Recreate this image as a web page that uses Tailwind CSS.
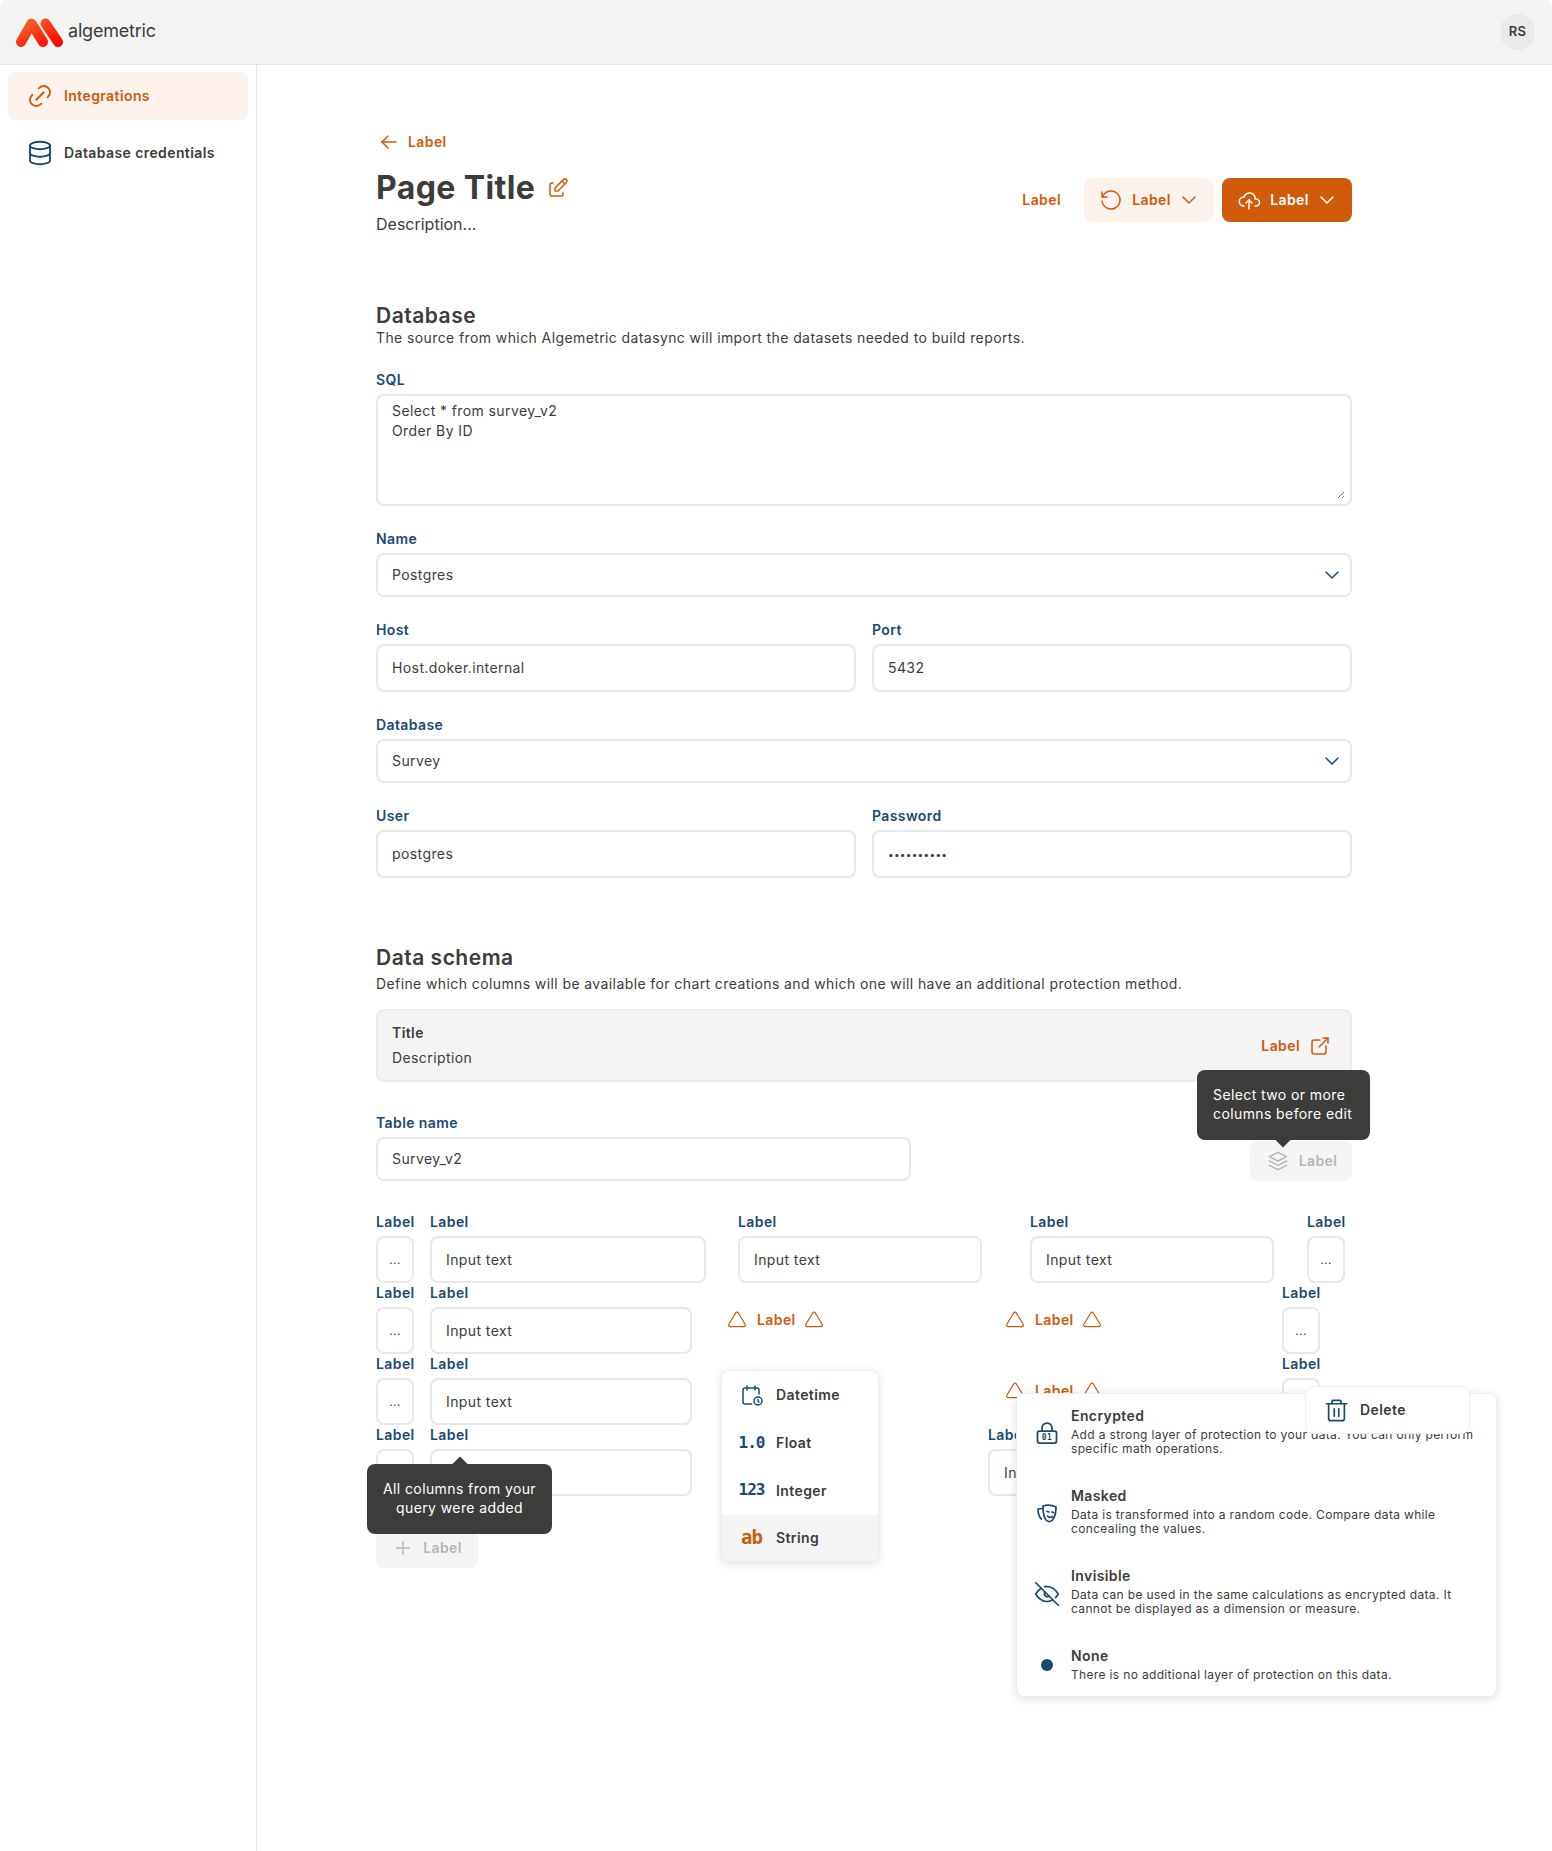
<!doctype html>
<html lang="en">
  <head>
    <meta charset="UTF-8" />
    <meta name="viewport" content="width=device-width, initial-scale=1.0" />
    <title>Integrations</title>
    <script src="https://cdn.jsdelivr.net/npm/@tailwindcss/browser@4"></script>
  </head>
  <body class="bg-white font-['Inter',sans-serif] text-[#3c3c3b] tracking-[0.4px]">
    <div class="relative h-[1851px] w-[1552px] overflow-hidden">
      <!-- top bar -->
      <header class="flex h-[65px] items-center justify-between rounded-t-lg border-b border-[#e5e5e5] bg-[#f4f4f4] pl-4 pr-[17px]">
        <div class="flex items-center gap-[5px]">
          <svg width="47" height="30" viewBox="0 0 47 30">
            <defs><linearGradient id="logo" x1="0" x2="1" y1="0" y2="1"><stop offset="0" stop-color="#f4652a"/><stop offset="1" stop-color="#ff0a00"/></linearGradient></defs>
            <path d="M5 25L15.500 6.500L27 25M29.500 6.500L42 25" fill="none" stroke="url(#logo)" stroke-width="10" stroke-linecap="round" stroke-linejoin="round"/>
          </svg>
          <span class="mt-[-4px] text-[18px] tracking-[-0.2px] text-[#3c3c3b]">algemetric</span>
        </div>
        <div class="flex h-9 w-[35px] items-center justify-center rounded-full bg-[#e9eaeb] text-[13px] font-semibold">RS</div>
      </header>

      <div class="flex h-[1786px]">
        <!-- sidebar -->
        <aside class="flex w-[257px] shrink-0 flex-col gap-[9px] border-r border-[#e5e5e5] px-2 pt-[7px] text-sm font-semibold">
          <a class="flex h-12 items-center gap-[9px] rounded-lg bg-[#fdf2ec] pl-[17px] text-[#d15a0b]">
            <svg class="h-[30px] w-[30px]" viewBox="0 0 24 24" fill="none" stroke="currentColor" stroke-width="1.5" stroke-linecap="round" stroke-linejoin="round"><path d="M9 15l6 -6"/><path d="M11 6l.463 -.536a5 5 0 0 1 7.071 7.072l-.534 .464"/><path d="M13 18l-.397 .534a5.068 5.068 0 0 1 -7.127 0a4.972 4.972 0 0 1 0 -7.071l.524 -.463"/></svg>
            Integrations
          </a>
          <a class="flex h-12 items-center gap-[9px] pl-[17px]">
            <svg class="h-[30px] w-[30px] text-[#1a4a72]" viewBox="0 0 24 24" fill="none" stroke="currentColor" stroke-width="1.5" stroke-linecap="round" stroke-linejoin="round"><path d="M4 6a8 3 0 1 0 16 0a8 3 0 1 0 -16 0"/><path d="M4 6v6a8 3 0 0 0 16 0v-6"/><path d="M4 12v6a8 3 0 0 0 16 0v-6"/></svg>
            Database credentials
          </a>
        </aside>

        <!-- main -->
        <main class="w-[1095px] pl-[119px] pt-[67px]">
          <a class="flex h-5 items-center gap-[7px] pl-px text-sm font-semibold text-[#d15a0b]">
            <svg class="h-6 w-6 shrink-0" viewBox="0 0 24 24" fill="none" stroke="currentColor" stroke-width="1.5" stroke-linecap="round" stroke-linejoin="round"><path d="M5 12l14 0"/><path d="M5 12l6 6"/><path d="M5 12l6 -6"/></svg>
            Label
          </a>

          <div class="mt-4 flex items-start justify-between">
            <div>
              <div class="flex h-[40px] items-center gap-[11px]">
                <h1 class="text-[32px] font-bold leading-10">Page Title</h1>
                <svg class="h-6 w-6 text-[#d15a0b]" viewBox="0 0 24 24" fill="none" stroke="currentColor" stroke-width="1.5" stroke-linecap="round" stroke-linejoin="round"><path d="M7 7h-1a2 2 0 0 0 -2 2v9a2 2 0 0 0 2 2h9a2 2 0 0 0 2 -2v-1"/><path d="M20.385 6.585a2.1 2.1 0 0 0 -2.97 -2.97l-8.415 8.385v3h3l8.385 -8.415z"/><path d="M16 5l3 3"/></svg>
              </div>
              <p class="mt-1 text-base leading-6 tracking-normal">Description...</p>
            </div>
            <div class="mt-[10px] flex items-center gap-2 text-sm font-semibold">
              <span class="mr-[15px] text-[#d15a0b]">Label</span>
              <button class="flex h-[44px] w-[130px] items-center justify-center gap-[9px] rounded-lg bg-[#fdf2ec] pl-[2px] text-[#d15a0b]">
                <svg class="h-6 w-6" viewBox="0 0 24 24" fill="none" stroke="currentColor" stroke-width="1.5" stroke-linecap="round" stroke-linejoin="round"><path d="M3.06 13a9 9 0 1 0 .49 -4.087"/><path d="M3 4.001v5h5"/></svg>
                Label
                <svg class="ml-[-3px] h-6 w-6" viewBox="0 0 24 24" fill="none" stroke="currentColor" stroke-width="1.5" stroke-linecap="round" stroke-linejoin="round"><path d="M6 9l6 6l6 -6"/></svg>
              </button>
              <button class="flex h-[44px] w-[130px] items-center justify-center gap-[9px] rounded-lg bg-[#d15a0b] pl-[2px] text-white">
                <svg class="h-6 w-6" viewBox="0 0 24 24" fill="none" stroke="currentColor" stroke-width="1.5" stroke-linecap="round" stroke-linejoin="round"><path d="M7 18a4.6 4.4 0 0 1 0 -9a5 4.5 0 0 1 11 2h1a3.5 3.5 0 0 1 0 7h-1"/><path d="M9 15l3 -3l3 3"/><path d="M12 12l0 9"/></svg>
                Label
                <svg class="ml-[-3px] h-6 w-6" viewBox="0 0 24 24" fill="none" stroke="currentColor" stroke-width="1.5" stroke-linecap="round" stroke-linejoin="round"><path d="M6 9l6 6l6 -6"/></svg>
              </button>
            </div>
          </div>

          <!-- database section -->
          <h2 class="mt-[66px] text-[21px] font-semibold leading-7 tracking-[0.5px]">Database</h2>
          <p class="mt-[-2px] text-sm leading-5">The source from which Algemetric datasync will import the datasets needed to build reports.</p>

          <label class="mt-[22px] block text-sm font-semibold leading-5 text-[#1a4a72]">SQL</label>
          <div class="relative mt-1 h-[112px] rounded-lg border-2 border-[#e8e8e8] px-[14px] pt-[5px] text-sm leading-5">
            <div>Select * from survey_v2</div>
            <div>Order By ID</div>
            <svg class="absolute bottom-[5px] right-[5px] h-2 w-2 text-[#777]" viewBox="0 0 8 8" fill="none" stroke="currentColor"><path d="M1 7L7 1M5 7L7 5"/></svg>
          </div>

          <label class="mt-[23px] block text-sm font-semibold leading-5 text-[#1a4a72]">Name</label>
          <div class="mt-1 flex h-[44px] items-center justify-between rounded-lg border-2 border-[#e8e8e8] pl-[14px] pr-[6px] text-sm">
            Postgres
            <svg class="h-6 w-6 text-[#1a4a72]" viewBox="0 0 24 24" fill="none" stroke="currentColor" stroke-width="1.5" stroke-linecap="round" stroke-linejoin="round"><path d="M6 9l6 6l6 -6"/></svg>
          </div>

          <div class="mt-[23px] flex gap-4">
            <div class="w-[480px]">
              <label class="block text-sm font-semibold leading-5 text-[#1a4a72]">Host</label>
              <div class="mt-1 flex h-12 items-center rounded-lg border-2 border-[#e8e8e8] px-[14px] text-sm">Host.doker.internal</div>
            </div>
            <div class="w-[480px]">
              <label class="block text-sm font-semibold leading-5 text-[#1a4a72]">Port</label>
              <div class="mt-1 flex h-12 items-center rounded-lg border-2 border-[#e8e8e8] px-[14px] text-sm">5432</div>
            </div>
          </div>

          <label class="mt-[23px] block text-sm font-semibold leading-5 text-[#1a4a72]">Database</label>
          <div class="mt-1 flex h-[44px] items-center justify-between rounded-lg border-2 border-[#e8e8e8] pl-[14px] pr-[6px] text-sm">
            Survey
            <svg class="h-6 w-6 text-[#1a4a72]" viewBox="0 0 24 24" fill="none" stroke="currentColor" stroke-width="1.5" stroke-linecap="round" stroke-linejoin="round"><path d="M6 9l6 6l6 -6"/></svg>
          </div>

          <div class="mt-[23px] flex gap-4">
            <div class="w-[480px]">
              <label class="block text-sm font-semibold leading-5 text-[#1a4a72]">User</label>
              <div class="mt-1 flex h-12 items-center rounded-lg border-2 border-[#e8e8e8] px-[14px] text-sm">postgres</div>
            </div>
            <div class="w-[480px]">
              <label class="block text-sm font-semibold leading-5 text-[#1a4a72]">Password</label>
              <div class="mt-1 flex h-12 items-center rounded-lg border-2 border-[#e8e8e8] px-[14px] text-[10px] tracking-[0.3px]">••••••••••</div>
            </div>
          </div>

          <!-- data schema section -->
          <h2 class="mt-[66px] text-[21px] font-semibold leading-7 tracking-[0.5px]">Data schema</h2>
          <p class="mt-[2px] text-sm leading-5">Define which columns will be available for chart creations and which one will have an additional protection method.</p>

          <div class="mt-[15px] flex h-[73px] items-center justify-between rounded-lg border-2 border-[#ececec] bg-[#f5f5f5] pl-[14px] pr-[18px]">
            <div class="text-sm">
              <div class="font-semibold leading-5">Title</div>
              <div class="mt-[5px] leading-5">Description</div>
            </div>
            <div class="flex items-center gap-2 text-sm font-semibold text-[#d15a0b]">
              Label
              <svg class="h-6 w-6" viewBox="0 0 24 24" fill="none" stroke="currentColor" stroke-width="1.5" stroke-linecap="round" stroke-linejoin="round"><path d="M12 6h-6a2 2 0 0 0 -2 2v10a2 2 0 0 0 2 2h10a2 2 0 0 0 2 -2v-6"/><path d="M11 13l9 -9"/><path d="M15 4h5v5"/></svg>
            </div>
          </div>

          <div class="mt-[31px] flex items-end justify-between">
            <div class="w-[535px]">
              <label class="block text-sm font-semibold leading-5 text-[#1a4a72]">Table name</label>
              <div class="mt-1 flex h-[44px] items-center rounded-lg border-2 border-[#e8e8e8] px-[14px] text-sm">Survey_v2</div>
            </div>
            <button class="flex h-10 w-[102px] items-center justify-center gap-[8px] rounded-lg bg-[#f5f5f5] text-sm font-semibold text-[#b5b5b5]">
              <svg class="h-[26px] w-[26px]" viewBox="0 0 24 24" fill="none" stroke="currentColor" stroke-width="1.3" stroke-linecap="round" stroke-linejoin="round"><path d="M12 4l-8 4l8 4l8 -4l-8 -4"/><path d="M4 12l8 4l8 -4"/><path d="M4 16l8 4l8 -4"/></svg>
              Label
            </button>
          </div>

          <!-- column rows -->
          <div class="mt-[31px] text-sm">
            <div class="flex h-[71px]">
              <div class="w-[38px]"><label class="block font-semibold leading-[19px] text-[#1a4a72]">Label</label><div class="mt-[5px] flex h-[47px] items-center justify-center rounded-lg border-2 border-[#e8e8e8] text-xs">...</div></div>
              <div class="ml-[16px] w-[276px]"><label class="block font-semibold leading-[19px] text-[#1a4a72]">Label</label><div class="mt-[5px] flex h-[47px] items-center rounded-lg border-2 border-[#e8e8e8] px-[14px]">Input text</div></div>
              <div class="ml-[32px] w-[244px]"><label class="block font-semibold leading-[19px] text-[#1a4a72]">Label</label><div class="mt-[5px] flex h-[47px] items-center rounded-lg border-2 border-[#e8e8e8] px-[14px]">Input text</div></div>
              <div class="ml-[48px] w-[244px]"><label class="block font-semibold leading-[19px] text-[#1a4a72]">Label</label><div class="mt-[5px] flex h-[47px] items-center rounded-lg border-2 border-[#e8e8e8] px-[14px]">Input text</div></div>
              <div class="ml-[33px] w-[38px]"><label class="block font-semibold leading-[19px] text-[#1a4a72]">Label</label><div class="mt-[5px] flex h-[47px] items-center justify-center rounded-lg border-2 border-[#e8e8e8] text-xs">...</div></div>
            </div>
            <div class="flex h-[71px]">
              <div class="w-[38px]"><label class="block font-semibold leading-[19px] text-[#1a4a72]">Label</label><div class="mt-[5px] flex h-[47px] items-center justify-center rounded-lg border-2 border-[#e8e8e8] text-xs">...</div></div>
              <div class="ml-[16px] w-[262px]"><label class="block font-semibold leading-[19px] text-[#1a4a72]">Label</label><div class="mt-[5px] flex h-[47px] items-center rounded-lg border-2 border-[#e8e8e8] px-[14px]">Input text</div></div>
              <div class="ml-[35px] flex h-[47px] w-[100px] items-end gap-[8px] font-semibold text-[#d15a0b]">
                <svg class="h-5 w-5" viewBox="0 0 24 24" fill="none" stroke="currentColor" stroke-width="1.5" stroke-linecap="round" stroke-linejoin="round"><path d="M10.363 3.591l-8.106 13.534a1.914 1.914 0 0 0 1.636 2.871h16.214a1.914 1.914 0 0 0 1.636 -2.87l-8.106 -13.536a1.914 1.914 0 0 0 -3.274 0z"/></svg>
                <span class="ml-[2px]">Label</span>
                <svg class="h-5 w-5" viewBox="0 0 24 24" fill="none" stroke="currentColor" stroke-width="1.5" stroke-linecap="round" stroke-linejoin="round"><path d="M10.363 3.591l-8.106 13.534a1.914 1.914 0 0 0 1.636 2.871h16.214a1.914 1.914 0 0 0 1.636 -2.87l-8.106 -13.536a1.914 1.914 0 0 0 -3.274 0z"/></svg>
              </div>
              <div class="ml-[178px] flex h-[47px] w-[100px] items-end gap-[8px] font-semibold text-[#d15a0b]">
                <svg class="h-5 w-5" viewBox="0 0 24 24" fill="none" stroke="currentColor" stroke-width="1.5" stroke-linecap="round" stroke-linejoin="round"><path d="M10.363 3.591l-8.106 13.534a1.914 1.914 0 0 0 1.636 2.871h16.214a1.914 1.914 0 0 0 1.636 -2.87l-8.106 -13.536a1.914 1.914 0 0 0 -3.274 0z"/></svg>
                <span class="ml-[2px]">Label</span>
                <svg class="h-5 w-5" viewBox="0 0 24 24" fill="none" stroke="currentColor" stroke-width="1.5" stroke-linecap="round" stroke-linejoin="round"><path d="M10.363 3.591l-8.106 13.534a1.914 1.914 0 0 0 1.636 2.871h16.214a1.914 1.914 0 0 0 1.636 -2.87l-8.106 -13.536a1.914 1.914 0 0 0 -3.274 0z"/></svg>
              </div>
              <div class="ml-[177px] w-[38px]"><label class="block font-semibold leading-[19px] text-[#1a4a72]">Label</label><div class="mt-[5px] flex h-[47px] items-center justify-center rounded-lg border-2 border-[#e8e8e8] text-xs">...</div></div>
            </div>
            <div class="flex h-[71px]">
              <div class="w-[38px]"><label class="block font-semibold leading-[19px] text-[#1a4a72]">Label</label><div class="mt-[5px] flex h-[47px] items-center justify-center rounded-lg border-2 border-[#e8e8e8] text-xs">...</div></div>
              <div class="ml-[16px] w-[262px]"><label class="block font-semibold leading-[19px] text-[#1a4a72]">Label</label><div class="mt-[5px] flex h-[47px] items-center rounded-lg border-2 border-[#e8e8e8] px-[14px]">Input text</div></div>
              <div class="ml-[313px] flex h-[47px] w-[100px] items-end gap-[8px] font-semibold text-[#d15a0b]">
                <svg class="h-5 w-5" viewBox="0 0 24 24" fill="none" stroke="currentColor" stroke-width="1.5" stroke-linecap="round" stroke-linejoin="round"><path d="M10.363 3.591l-8.106 13.534a1.914 1.914 0 0 0 1.636 2.871h16.214a1.914 1.914 0 0 0 1.636 -2.87l-8.106 -13.536a1.914 1.914 0 0 0 -3.274 0z"/></svg>
                <span class="ml-[2px]">Label</span>
                <svg class="h-5 w-5" viewBox="0 0 24 24" fill="none" stroke="currentColor" stroke-width="1.5" stroke-linecap="round" stroke-linejoin="round"><path d="M10.363 3.591l-8.106 13.534a1.914 1.914 0 0 0 1.636 2.871h16.214a1.914 1.914 0 0 0 1.636 -2.87l-8.106 -13.536a1.914 1.914 0 0 0 -3.274 0z"/></svg>
              </div>
              <div class="ml-[177px] w-[38px]"><label class="block font-semibold leading-[19px] text-[#1a4a72]">Label</label><div class="mt-[5px] flex h-[47px] items-center justify-center rounded-lg border-2 border-[#e8e8e8] text-xs">...</div></div>
            </div>
            <div class="flex h-[71px]">
              <div class="w-[38px]"><label class="block font-semibold leading-[19px] text-[#1a4a72]">Label</label><div class="mt-[5px] flex h-[47px] items-center justify-center rounded-lg border-2 border-[#e8e8e8] text-xs">...</div></div>
              <div class="ml-[16px] w-[262px]"><label class="block font-semibold leading-[19px] text-[#1a4a72]">Label</label><div class="mt-[5px] flex h-[47px] items-center rounded-lg border-2 border-[#e8e8e8] px-[14px]">Input text</div></div>
              <div class="ml-[296px] w-[244px]"><label class="block font-semibold leading-[19px] text-[#1a4a72]">Label</label><div class="mt-[5px] flex h-[47px] items-center rounded-lg border-2 border-[#e8e8e8] px-[14px]">Input text</div></div>
            </div>
            <button class="mt-[32px] flex h-10 w-[102px] items-center justify-center gap-[9px] rounded-lg bg-[#f5f5f5] font-semibold text-[#b5b5b5]">
              <svg class="h-[22px] w-[22px]" viewBox="0 0 24 24" fill="none" stroke="currentColor" stroke-width="1.5" stroke-linecap="round" stroke-linejoin="round"><path d="M12 5v14"/><path d="M5 12h14"/></svg>
              Label
            </button>
          </div>
        </main>
      </div>

      <!-- tooltips and menus over the form -->
      <div class="absolute left-[1197px] top-[1070px] h-[70px] w-[173px] rounded-lg bg-[#3c3c3b] pl-4 py-[15px] text-sm leading-[19px] text-white">
        Select two or more columns before edit
        <span class="absolute left-[80px] top-[63px] h-3 w-3 rotate-45 bg-[#3c3c3b]"></span>
      </div>

      <div class="absolute left-[367px] top-[1464px] h-[70px] w-[185px] rounded-lg bg-[#3c3c3b] px-3 py-[15px] text-center text-sm leading-[19px] text-white">
        All columns from your query were added
        <span class="absolute left-[87px] top-[-5px] h-3 w-3 rotate-45 bg-[#3c3c3b]"></span>
      </div>

      <div class="absolute left-[721px] top-[1370px] w-[158px] overflow-hidden rounded-lg border border-[#eeeeee] bg-white text-sm font-semibold shadow-[0_2px_8px_rgba(0,0,0,0.12)]">
        <div class="flex h-12 items-center">
          <span class="flex w-[54px] justify-center pl-[5px] text-[#1a4a72]">
            <svg class="h-6 w-6" viewBox="0 0 24 24" fill="none" stroke="currentColor" stroke-width="1.5" stroke-linecap="round" stroke-linejoin="round"><path d="M11.795 21h-6.795a2 2 0 0 1 -2 -2v-12a2 2 0 0 1 2 -2h12a2 2 0 0 1 2 2v4"/><path d="M14 18a4 4 0 1 0 8 0a4 4 0 1 0 -8 0"/><path d="M15 3v4"/><path d="M7 3v4"/><path d="M18 16.496v1.504l1 1"/></svg>
          </span>
          Datetime
        </div>
        <div class="flex h-12 items-center">
          <span class="flex w-[54px] justify-center pl-[5px] font-['DejaVu_Sans_Mono',monospace] text-[16px] font-bold tracking-[-1px] text-[#1a4a72]">1.0</span>
          Float
        </div>
        <div class="flex h-[47.5px] items-center">
          <span class="flex w-[54px] justify-center pl-[5px] font-['DejaVu_Sans_Mono',monospace] text-[16px] font-bold tracking-[-1px] text-[#1a4a72]">123</span>
          Integer
        </div>
        <div class="flex h-[46.5px] items-center bg-[#f5f5f5]">
          <span class="flex w-[54px] justify-center pl-[5px] font-['DejaVu_Sans_Mono',monospace] text-[19px] font-bold tracking-[-1px] text-[#d15a0b]">ab</span>
          String
        </div>
      </div>

      <div class="absolute left-[1016px] top-[1393px] h-[304px] w-[481px] rounded-lg border border-[#eeeeee] bg-white shadow-[0_2px_10px_rgba(0,0,0,0.12)]">
        <div class="flex h-20 items-start pl-[18px] pr-2 pt-[13px]">
          <svg class="mt-[14px] h-6 w-6 shrink-0 text-[#1a4a72]" viewBox="0 0 24 24" fill="none" stroke="currentColor" stroke-width="1.75" stroke-linecap="round" stroke-linejoin="round"><path d="M7 10V7a5 5 0 0 1 10 0v3"/><rect x="2.5" y="10" width="19" height="12" rx="2"/><text x="12" y="19" text-anchor="middle" font-size="8" font-weight="700" fill="currentColor" stroke="none" font-family="DejaVu Sans Mono">01</text></svg>
          <div class="ml-[12px]">
            <div class="text-sm font-semibold leading-[18px]">Encrypted</div>
            <p class="mt-[3px] text-xs leading-[14px] tracking-[0.34px]">Add a strong layer of protection to your data. You can only perform specific math operations.</p>
          </div>
        </div>
        <div class="flex h-20 items-start pl-[18px] pr-2 pt-[13px]">
          <svg class="mt-[14px] h-6 w-6 shrink-0 text-[#1a4a72]" viewBox="0 0 24 24" fill="none" stroke="currentColor" stroke-width="1.75" stroke-linecap="round" stroke-linejoin="round"><path d="M7.500 7.500L3 8c0 5 1 8 3.500 10"/><path d="M8 5c4-1.500 9-1 13 1 0 5-1 10-3.500 13-2 2-4.500 2-6.500 0-2.500-3-3-9-3-14z"/><path d="M12 10.500l2 .5M17 11l1.500 .5"/><path d="M12.500 15c1.500 1.500 3.500 1.500 5 .5"/></svg>
          <div class="ml-[12px]">
            <div class="text-sm font-semibold leading-[18px]">Masked</div>
            <p class="mt-[3px] text-xs leading-[14px] tracking-[0.34px]">Data is transformed into a random code. Compare data while concealing the values.</p>
          </div>
        </div>
        <div class="flex h-20 items-start pl-[15px] pr-2 pt-[13px]">
          <svg class="mt-[12px] h-[30px] w-[30px] shrink-0 text-[#1a4a72]" viewBox="0 0 24 24" fill="none" stroke="currentColor" stroke-width="1.4" stroke-linecap="round" stroke-linejoin="round"><path d="M10.585 10.587a2 2 0 0 0 2.829 2.828"/><path d="M16.681 16.673a8.717 8.717 0 0 1 -4.681 1.327c-3.6 0 -6.6 -2 -9 -6c1.272 -2.12 2.712 -3.678 4.32 -4.674m2.86 -1.146a9.055 9.055 0 0 1 1.82 -.18c3.6 0 6.6 2 9 6c-.666 1.11 -1.379 2.067 -2.138 2.87"/><path d="M3 3l18 18"/></svg>
          <div class="ml-[9px]">
            <div class="text-sm font-semibold leading-[18px]">Invisible</div>
            <p class="mt-[3px] text-xs leading-[14px] tracking-[0.34px]">Data can be used in the same calculations as encrypted data. It cannot be displayed as a dimension or measure.</p>
          </div>
        </div>
        <div class="flex items-start pl-[18px] pr-2 pt-[13px]">
          <span class="mt-[12px] flex w-6 shrink-0 justify-center"><span class="h-3 w-3 rounded-full bg-[#1a4a72]"></span></span>
          <div class="ml-[12px]">
            <div class="text-sm font-semibold leading-[18px]">None</div>
            <p class="mt-[3px] text-xs leading-[14px] tracking-[0.34px]">There is no additional layer of protection on this data.</p>
          </div>
        </div>
      </div>

      <div class="absolute left-[1305px] top-[1386px] flex h-[48px] w-[165px] items-center gap-[10px] rounded-lg border border-[#eeeeee] bg-white pl-[17px] text-sm font-semibold">
        <svg class="h-[27px] w-[27px] text-[#1a4a72]" viewBox="0 0 24 24" fill="none" stroke="currentColor" stroke-width="1.5" stroke-linecap="round" stroke-linejoin="round"><path d="M3 6h18"/><path d="M5 6v13a2 2 0 0 0 2 2h10a2 2 0 0 0 2 -2V6"/><path d="M8 6V4a1 1 0 0 1 1-1h6a1 1 0 0 1 1 1v2"/><path d="M10 10.500v6.500"/><path d="M14 10.500v6.500"/></svg>
        Delete
      </div>
    </div>
  </body>
</html>
